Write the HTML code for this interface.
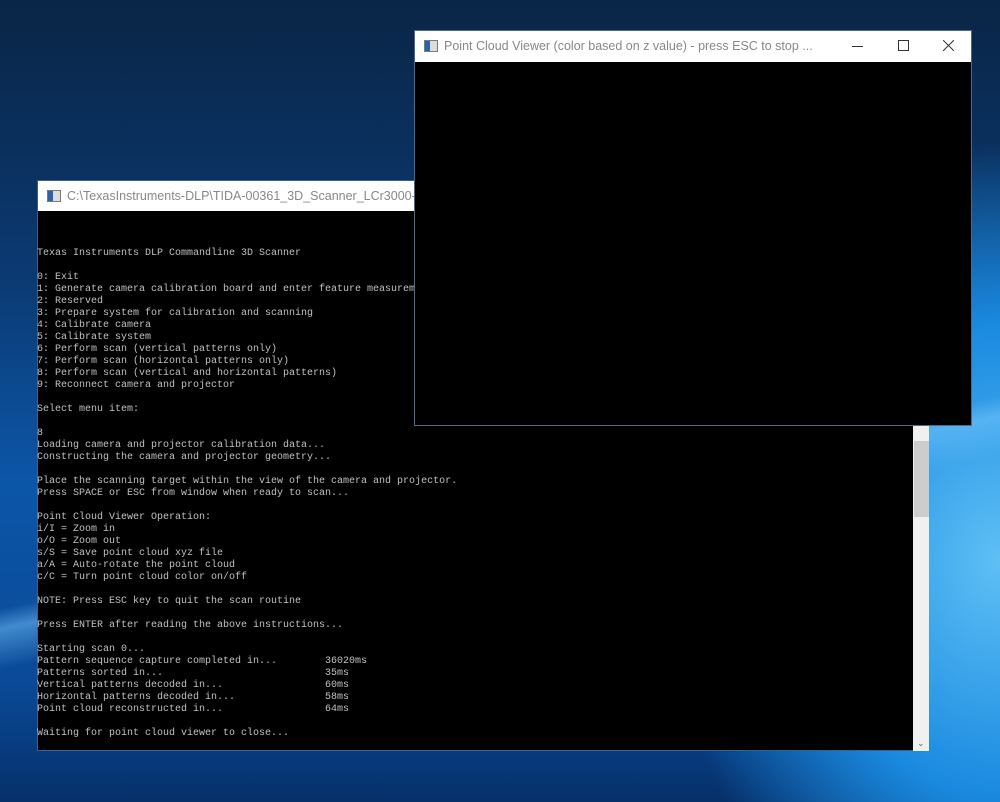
<!DOCTYPE html>
<html><head><meta charset="utf-8"><style>
html,body{margin:0;padding:0;width:1000px;height:802px;overflow:hidden}
body{position:relative;background:
linear-gradient(168deg, rgba(255,255,255,0) 60%, rgba(120,200,255,0.5) 62%, rgba(0,0,0,0) 66%),
radial-gradient(ellipse 420px 520px at 1000px 560px,#5fc0f5 0%,#1a8ae0 45%,rgba(10,70,160,0) 80%),
linear-gradient(180deg,#0a2546 0%,#0b3a73 35%,#0c56a8 60%,#0a4a98 85%,#06306a 100%);}
.win{position:absolute;background:#000;}
.tb{position:absolute;left:0;right:0;top:0;height:30px;background:#fff;font-family:"Liberation Sans",sans-serif;font-size:12.5px;color:#888;}
.ic{position:absolute;left:9px;top:9px;width:12px;height:10px;border:1px solid #7a7a7a;background:linear-gradient(90deg,#2a63a8 0 5px,#ddd 5px)}
.tt{position:absolute;left:29px;top:8px;white-space:nowrap}
pre{position:absolute;margin:0;left:0;font-family:"Liberation Mono",monospace;font-size:10px;line-height:12px;color:#c0c0c0;letter-spacing:0}
</style></head><body>
<div class="win" style="left:37px;top:180px;width:892px;height:571px;border:1px solid #3a5f8a;box-sizing:border-box">
 <div class="tb" style="height:30px"><div class="ic"></div><div class="tt">C:\TexasInstruments-DLP\TIDA-00361_3D_Scanner_LCr3000-2</div></div>
 <pre style="top:67px;left:-1px">Texas Instruments DLP Commandline 3D Scanner

0: Exit
1: Generate camera calibration board and enter feature measurements
2: Reserved
3: Prepare system for calibration and scanning
4: Calibrate camera
5: Calibrate system
6: Perform scan (vertical patterns only)
7: Perform scan (horizontal patterns only)
8: Perform scan (vertical and horizontal patterns)
9: Reconnect camera and projector

Select menu item:

8
Loading camera and projector calibration data...
Constructing the camera and projector geometry...

Place the scanning target within the view of the camera and projector.
Press SPACE or ESC from window when ready to scan...

Point Cloud Viewer Operation:
i/I = Zoom in
o/O = Zoom out
s/S = Save point cloud xyz file
a/A = Auto-rotate the point cloud
c/C = Turn point cloud color on/off

NOTE: Press ESC key to quit the scan routine

Press ENTER after reading the above instructions...

Starting scan 0...
Pattern sequence capture completed in...        36020ms
Patterns sorted in...                           35ms
Vertical patterns decoded in...                 60ms
Horizontal patterns decoded in...               58ms
Point cloud reconstructed in...                 64ms

Waiting for point cloud viewer to close...</pre>
 <div style="position:absolute;left:875px;top:30px;width:16px;height:540px;background:#f0f0f0"></div>
 <div style="position:absolute;left:876px;top:260px;width:15px;height:76px;background:#cdcdcd"></div>
 <div style="position:absolute;left:879px;top:558px;font:9px 'DejaVu Sans',sans-serif;color:#606060">&#8964;</div>
</div>
<div class="win" style="left:414px;top:30px;width:558px;height:396px;border:1px solid #4a6a8a;box-sizing:border-box">
 <div class="tb" style="height:31px"><div class="ic"></div><div class="tt">Point Cloud Viewer (color based on z value) - press ESC to stop ...</div>
  <div style="position:absolute;left:437px;top:15px;width:11px;height:1px;background:#333"></div>
  <div style="position:absolute;left:483px;top:9px;width:9px;height:9px;border:1px solid #333"></div>
  <svg style="position:absolute;left:528px;top:9px" width="11" height="11"><path d="M0 0L11 11M11 0L0 11" stroke="#333" stroke-width="1"/></svg>
 </div>
</div>
</body></html>
